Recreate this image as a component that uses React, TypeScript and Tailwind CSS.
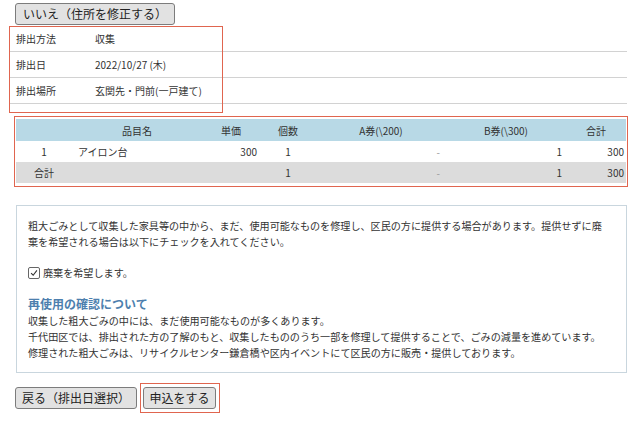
const font = { fontFamily: '"Noto Sans CJK JP", "Noto Sans", sans-serif' };

const details = [
  { label: '排出方法', value: '収集' },
  { label: '排出日', value: '2022/10/27 (木)' },
  { label: '排出場所', value: '玄関先・門前(一戸建て)' },
];

const cols = ['w-[56px]', 'w-[130px]', 'w-[58px]', 'w-[56px]', 'w-[130px]', 'w-[120px]', 'w-[60px]'];

function Button({ children, className = '' }: { children: React.ReactNode; className?: string }) {
  return (
    <button
      type="button"
      className={`flex h-[22px] items-center justify-center rounded-[3px] border border-[#7c7c7c] bg-[#e2e2e2] text-[12px] leading-none text-[#222] ${className}`}
    >
      {children}
    </button>
  );
}

export default function App() {
  return (
    <div className="w-[640px] h-[423px] bg-white text-[#333] overflow-hidden" style={font}>
      <div className="flex pl-[15px] pt-[3px]">
        <Button className="w-[160px]">いいえ（住所を修正する）</Button>
      </div>

      {/* 排出情報 */}
      <div className="relative ml-[10px] mt-[1px] w-[617px]">
        {details.map((d) => (
          <div key={d.label} className="flex h-[26px] items-center border-b border-[#d2d2d2] text-[10px]">
            <span className="w-[85px] pl-[6px]">{d.label}</span>
            <span>{d.value}</span>
          </div>
        ))}
        <div className="absolute left-[-1px] top-0 h-[87px] w-[214px] border-[1.5px] border-[#e0654f]" />
      </div>

      {/* 品目テーブル */}
      <div className="relative ml-[16px] mt-[15px] w-[610px] text-[10px]">
        <div className="flex h-[22px] items-center bg-[#b8d9e6] text-center">
          <span className={cols[0]} />
          <span className={cols[1]}>品目名</span>
          <span className={cols[2]}>単価</span>
          <span className={cols[3]}>個数</span>
          <span className={cols[4]}>A券(\200)</span>
          <span className={cols[5]}>B券(\300)</span>
          <span className={cols[6]}>合計</span>
        </div>
        <div className="flex h-[21px] items-center bg-white">
          <span className={`${cols[0]} text-center`}>1</span>
          <span className={`${cols[1]} pl-[6px]`}>アイロン台</span>
          <span className={`${cols[2]} pr-[3px] text-right`}>300</span>
          <span className={`${cols[3]} text-center`}>1</span>
          <span className={`${cols[4]} pr-[6px] text-right text-[#999]`}>-</span>
          <span className={`${cols[5]} pr-[4px] text-right`}>1</span>
          <span className={`${cols[6]} pr-[2px] text-right`}>300</span>
        </div>
        <div className="flex h-[21px] items-center bg-[#dcdcdc]">
          <span className={`${cols[0]} text-center`}>合計</span>
          <span className={cols[1]} />
          <span className={cols[2]} />
          <span className={`${cols[3]} text-center`}>1</span>
          <span className={`${cols[4]} pr-[6px] text-right text-[#999]`}>-</span>
          <span className={`${cols[5]} pr-[4px] text-right`}>1</span>
          <span className={`${cols[6]} pr-[2px] text-right`}>300</span>
        </div>
        <div className="absolute left-[-2px] top-[-3px] h-[71px] w-[614px] border-[1.5px] border-[#e0654f]" />
      </div>

      {/* 再使用の確認 */}
      <div className="ml-[16px] mt-[22px] w-[611px] border-[1.5px] border-[#c9d6de] pl-[11px] pr-[18px] pt-[12px] pb-[11px] text-[10.1px] leading-[16px]">
        <p>
          粗大ごみとして収集した家具等の中から、まだ、使用可能なものを修理し、区民の方に提供する場合があります。提供せずに廃棄を希望される場合は以下にチェックを入れてください。
        </p>
        <label className="mt-[15px] flex items-center gap-[3px]">
          <span className="flex h-[12px] w-[12px] items-center justify-center rounded-[2px] border border-[#666] bg-white">
            <svg viewBox="0 0 12 12" className="h-[10px] w-[10px]">
              <path d="M2.5 6.2 L5 8.7 L9.5 2.8" fill="none" stroke="#333" strokeWidth="1.3" />
            </svg>
          </span>
          <span>廃棄を希望します。</span>
        </label>
        <h2 className="mt-[14px] text-[12px] font-bold leading-[18px] text-[#4d7fae]">再使用の確認について</h2>
        <p>収集した粗大ごみの中には、まだ使用可能なものが多くあります。</p>
        <p>千代田区では、排出された方の了解のもと、収集したもののうち一部を修理して提供することで、ごみの減量を進めています。</p>
        <p>修理された粗大ごみは、リサイクルセンター鎌倉橋や区内イベントにて区民の方に販売・提供しております。</p>
      </div>

      {/* 操作ボタン */}
      <div className="ml-[15px] mt-[14px] flex items-center gap-[6px]">
        <Button className="w-[122px]">戻る（排出日選択）</Button>
        <div className="relative flex">
          <Button className="w-[73px]">申込をする</Button>
          <div className="absolute left-[-3px] top-[-4px] h-[30px] w-[80px] border-[1.5px] border-[#e0654f]" />
        </div>
      </div>
    </div>
  );
}
